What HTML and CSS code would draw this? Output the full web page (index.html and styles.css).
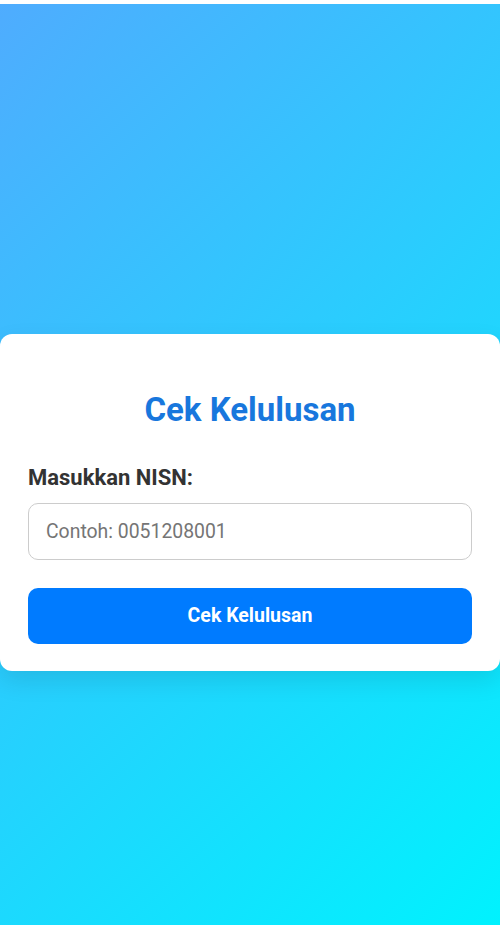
FILE: index.html
```html
<!DOCTYPE html>
<html lang="id">
<head>
  <meta charset="UTF-8">
  <meta name="viewport" content="width=device-width, initial-scale=1.0">
  <title>Cek Kelulusan</title>
  <link rel="stylesheet" href="styles.css">
</head>
<body>
  <div class="page">
    <!-- Form pengecekan kelulusan -->
    <div class="card">
      <h2 class="title">Cek Kelulusan</h2>
      <label class="label" for="nisn">Masukkan NISN:</label>
      <input id="nisn" class="input" type="text" placeholder="Contoh: 0051208001">
      <button class="btn" type="button">Cek Kelulusan</button>
    </div>
  </div>
</body>
</html>
```

FILE: styles.css
```css
html {
  background-color: white;
}

body {
  margin: 4px 0 2px;
  font-family: Roboto, "Liberation Sans", Arial, sans-serif;
}

.page {
  height: 921px;
  padding-top: 330px;
  box-sizing: border-box;
  background: linear-gradient(135deg, #4facfe, #00f2fe);
}

.card {
  display: flex;
  flex-direction: column;
  background-color: white;
  border-radius: 12px;
  padding: 28px 28px 27px;
  box-shadow: 0 10px 25px rgba(0, 0, 0, 0.1);
}

.title {
  margin: 28px 0 35px;
  font-size: 33px;
  line-height: 1.2;
  font-weight: bold;
  text-align: center;
  color: #1877dd;
}

.label {
  font-size: 22px;
  font-weight: bold;
  color: #333;
  margin-bottom: 13px;
}

.input {
  height: 57px;
  box-sizing: border-box;
  padding: 0 17px;
  border: 1px solid #ccc;
  border-radius: 10px;
  font-family: inherit;
  font-size: 19.4px;
  color: #333;
  outline: none;
}

.input::placeholder {
  color: #757575;
}

.btn {
  margin-top: 28px;
  height: 56px;
  border: none;
  border-radius: 10px;
  background-color: #007bff;
  color: white;
  font-family: inherit;
  font-size: 19.5px;
  font-weight: bold;
  cursor: pointer;
}
```
